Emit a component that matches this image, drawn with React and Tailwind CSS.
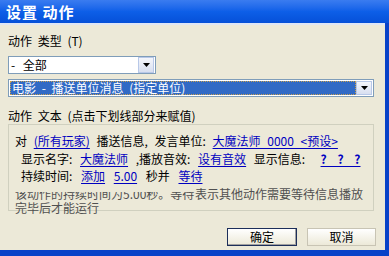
import React from 'react';

const font = { fontFamily: '"Noto Sans CJK SC", "Noto Sans", sans-serif' };

const Arrow = () => (
  <div className="flex h-full w-[16px] items-center justify-center border border-[#b8c8e8] bg-gradient-to-b from-[#f4f6fb] to-[#d8dff0]">
    <svg width="7" height="4" viewBox="0 0 7 4">
      <path d="M0 0h7L3.5 4z" fill="#000" />
    </svg>
  </div>
);

const Link = ({ children }) => (
  <span className="text-[#0000c0] underline underline-offset-2">{children}</span>
);

const App = () => {
  return (
    <div className="flex h-[256px] w-[389px] flex-col overflow-hidden bg-[#0842c8] text-[12px] leading-none text-black" style={font}>
      <div className="flex h-[23px] items-center bg-gradient-to-b from-[#3a7cf0] via-[#0d5fe8] to-[#0650d8] pl-[6px]">
        <span className="text-[15px] font-bold tracking-[1px] text-white">设置 动作</span>
      </div>
      <div className="mr-[4px] mb-[6px] flex flex-1 flex-col border-t-2 border-[#dfe6f5] bg-[#ece9d8] px-[8px] [word-spacing:3px]">
        <div className="mt-[10px] h-[12px]">动作 类型 (T)</div>
        <div className="mt-[9px] flex h-[18px] w-[148px] items-center border border-[#7f9db9] bg-white pl-[2px] pr-px">
          <span className="flex-1 [word-spacing:5px]">- 全部</span>
          <Arrow />
        </div>
        <div className="mt-[5px] flex h-[18px] w-[366px] items-center border border-[#7f9db9] bg-white p-px">
          <span className="flex h-full flex-1 items-center border border-dotted border-[#c8a050] bg-[#316ac5] pl-px text-white">
            电影 - 播送单位消息 (指定单位)
          </span>
          <Arrow />
        </div>
        <div className="mt-[13px] h-[12px]">动作 文本 (点击下划线部分来赋值)</div>
        <div className="mt-[2px] mr-[3px] h-[87px] border border-[#d0d0bf] px-[6px] pt-[10px] [word-spacing:4px]">
          <div className="h-[14px] whitespace-nowrap">
            对 <Link>(所有玩家)</Link> 播送信息, 发言单位: <Link>大魔法师 0000 &lt;预设&gt;</Link>
          </div>
          <div className="mt-[4px] h-[14px] whitespace-nowrap pl-[6px] [word-spacing:5px]">
            显示名字: <Link>大魔法师</Link> ,播放音效: <Link>设有音效</Link> 显示信息:{'\u00a0\u00a0'}<Link><b className="[word-spacing:8px]">? ? ?</b></Link>
          </div>
          <div className="mt-[3px] h-[14px] whitespace-nowrap pl-[6px] [word-spacing:6px]">
            持续时间: <Link>添加</Link> <Link>5.00</Link> 秒并 <Link>等待</Link>
          </div>
          <div className="mt-[4px] flex items-end whitespace-nowrap text-[#505050] [word-spacing:0px]">
            <div className="h-[8px] w-[180px] overflow-hidden">
              <div className="-mt-[4px]">该动作的持续时间为5.00秒。等待</div>
            </div>
            <span>表示其他动作需要等待信息播放</span>
          </div>
          <div className="mt-[2px] text-[#505050]">完毕后才能运行</div>
        </div>
        <div className="mt-[17px] flex justify-end gap-[10px] pr-[1px]">
          <button className="h-[18px] w-[70px] border border-[#1c2e5a] bg-gradient-to-b from-[#ffffff] to-[#ece9d8] shadow-[inset_-1px_-1px_0_#a0a0a0]">确定</button>
          <button className="h-[18px] w-[69px] border border-[#c8c4b4] bg-gradient-to-b from-[#ffffff] to-[#ece9d8]">取消</button>
        </div>
      </div>
    </div>
  );
};

export default App;
